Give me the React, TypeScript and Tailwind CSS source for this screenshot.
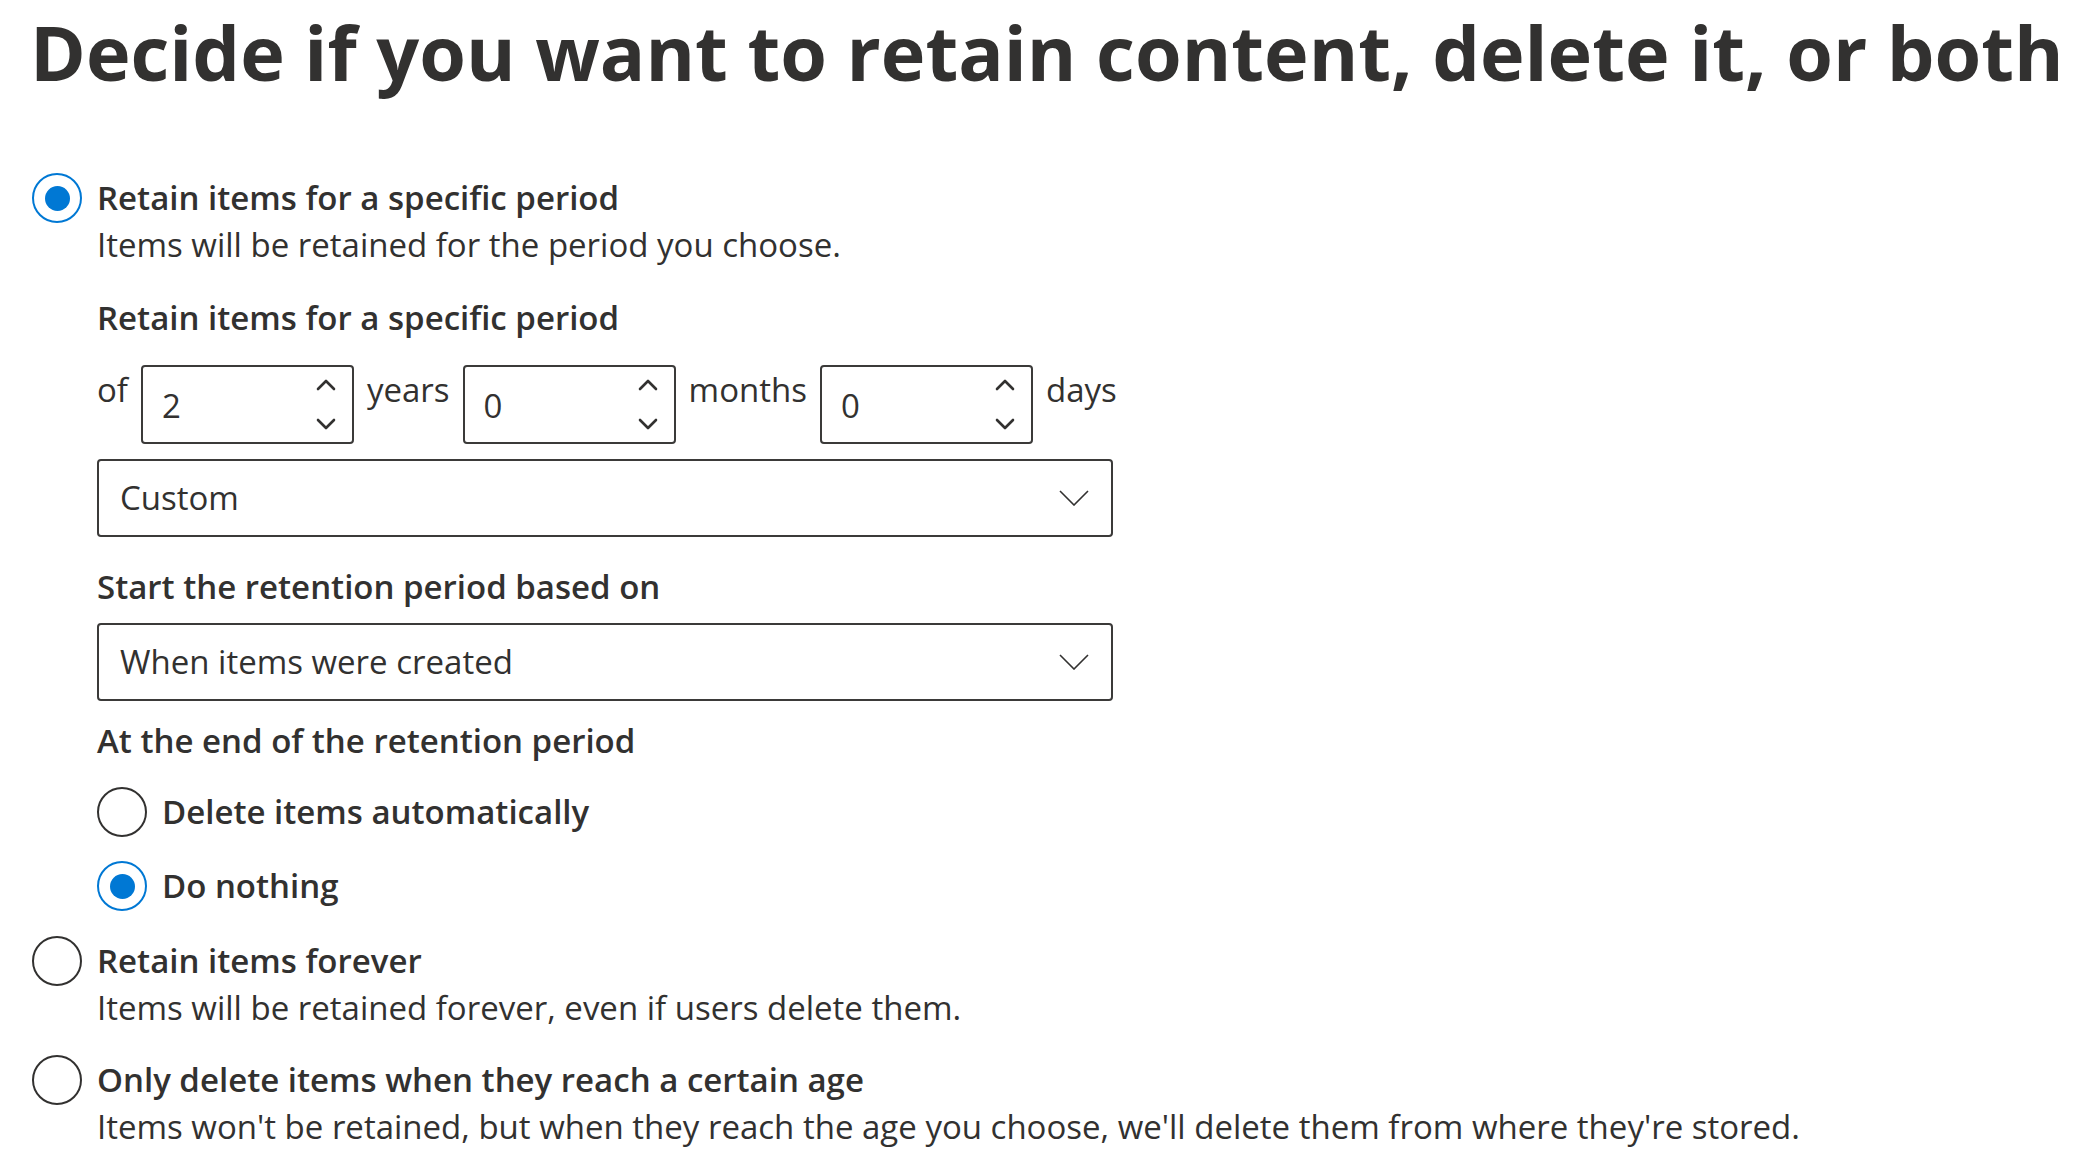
import React from "react";

const font = { fontFamily: '"Open Sans", "Noto Sans", Arial, sans-serif' };

function Radio({ checked }: { checked?: boolean }) {
  return (
    <span
      className={`flex h-[50px] w-[50px] shrink-0 items-center justify-center rounded-full border-2 ${
        checked ? "border-[#0078d4]" : "border-[#323130]"
      }`}
    >
      {checked && <span className="h-[25px] w-[25px] rounded-full bg-[#0078d4]" />}
    </span>
  );
}

function ChevronUp() {
  return (
    <svg width="20" height="12" viewBox="0 0 20 12" fill="none">
      <path d="M2 10 L10 2 L18 10" stroke="#323130" strokeWidth="2.6" strokeLinecap="round" strokeLinejoin="round" />
    </svg>
  );
}

function ChevronDown() {
  return (
    <svg width="20" height="12" viewBox="0 0 20 12" fill="none">
      <path d="M2 2 L10 10 L18 2" stroke="#323130" strokeWidth="2.6" strokeLinecap="round" strokeLinejoin="round" />
    </svg>
  );
}

function SpinBox({ value }: { value: string }) {
  return (
    <div className="flex h-[79px] w-[213px] shrink-0 justify-between rounded-[4px] border-2 border-[#3b3a39] pl-[19px] pr-[16px]">
      <span className="pt-[17px] text-[33px] leading-[44px]">{value}</span>
      <div className="flex flex-col justify-between py-[12px]">
        <ChevronUp />
        <ChevronDown />
      </div>
    </div>
  );
}

function Dropdown({ value }: { value: string }) {
  return (
    <div className="flex h-[78px] w-[1016px] items-center justify-between rounded-[4px] border-2 border-[#3b3a39] pl-[21px] pr-[22px]">
      <span className="text-[33px] leading-[44px]">{value}</span>
      <svg width="30" height="16" viewBox="0 0 30 16" fill="none">
        <path d="M1 1 L15 15 L29 1" stroke="#323130" strokeWidth="1.6" />
      </svg>
    </div>
  );
}

export default function App() {
  return (
    <div className="min-h-screen bg-white text-[#323130]" style={font}>
      <h1 className="pl-[30px] text-[75.5px] font-bold leading-[103px] whitespace-nowrap">
        Decide if you want to retain content, delete it, or both
      </h1>

      <div className="pl-[32px] text-[33px] leading-[44px]">
        {/* option 1 */}
        <div className="mt-[70px] flex items-center gap-[15px]">
          <Radio checked />
          <span className="font-semibold">Retain items for a specific period</span>
        </div>

        <div className="pl-[65px]">
          <p>Items will be retained for the period you choose.</p>

          <p className="mt-[29px] font-semibold">Retain items for a specific period</p>

          <div className="mt-[25px] flex items-start gap-[13px]">
            <span className="mt-[3px]">of</span>
            <SpinBox value="2" />
            <span className="mt-[3px]">years</span>
            <SpinBox value="0" />
            <span className="mt-[3px]">months</span>
            <SpinBox value="0" />
            <span className="mt-[3px]">days</span>
          </div>

          <div className="mt-[15px]">
            <Dropdown value="Custom" />
          </div>

          <p className="mt-[28px] font-semibold">Start the retention period based on</p>

          <div className="mt-[14px]">
            <Dropdown value="When items were created" />
          </div>

          <p className="mt-[18px] font-semibold">At the end of the retention period</p>

          <div className="mt-[24px] flex items-center gap-[15px]">
            <Radio />
            <span className="font-semibold">Delete items automatically</span>
          </div>
          <div className="mt-[24px] flex items-center gap-[15px]">
            <Radio checked />
            <span className="font-semibold">Do nothing</span>
          </div>
        </div>

        {/* option 2 */}
        <div className="mt-[25px] flex items-center gap-[15px]">
          <Radio />
          <span className="font-semibold">Retain items forever</span>
        </div>
        <p className="pl-[65px]">Items will be retained forever, even if users delete them.</p>

        {/* option 3 */}
        <div className="mt-[25px] flex items-center gap-[15px]">
          <Radio />
          <span className="font-semibold">Only delete items when they reach a certain age</span>
        </div>
        <p className="pl-[65px]">
          Items won't be retained, but when they reach the age you choose, we'll delete them from where they're stored.
        </p>
      </div>
    </div>
  );
}
